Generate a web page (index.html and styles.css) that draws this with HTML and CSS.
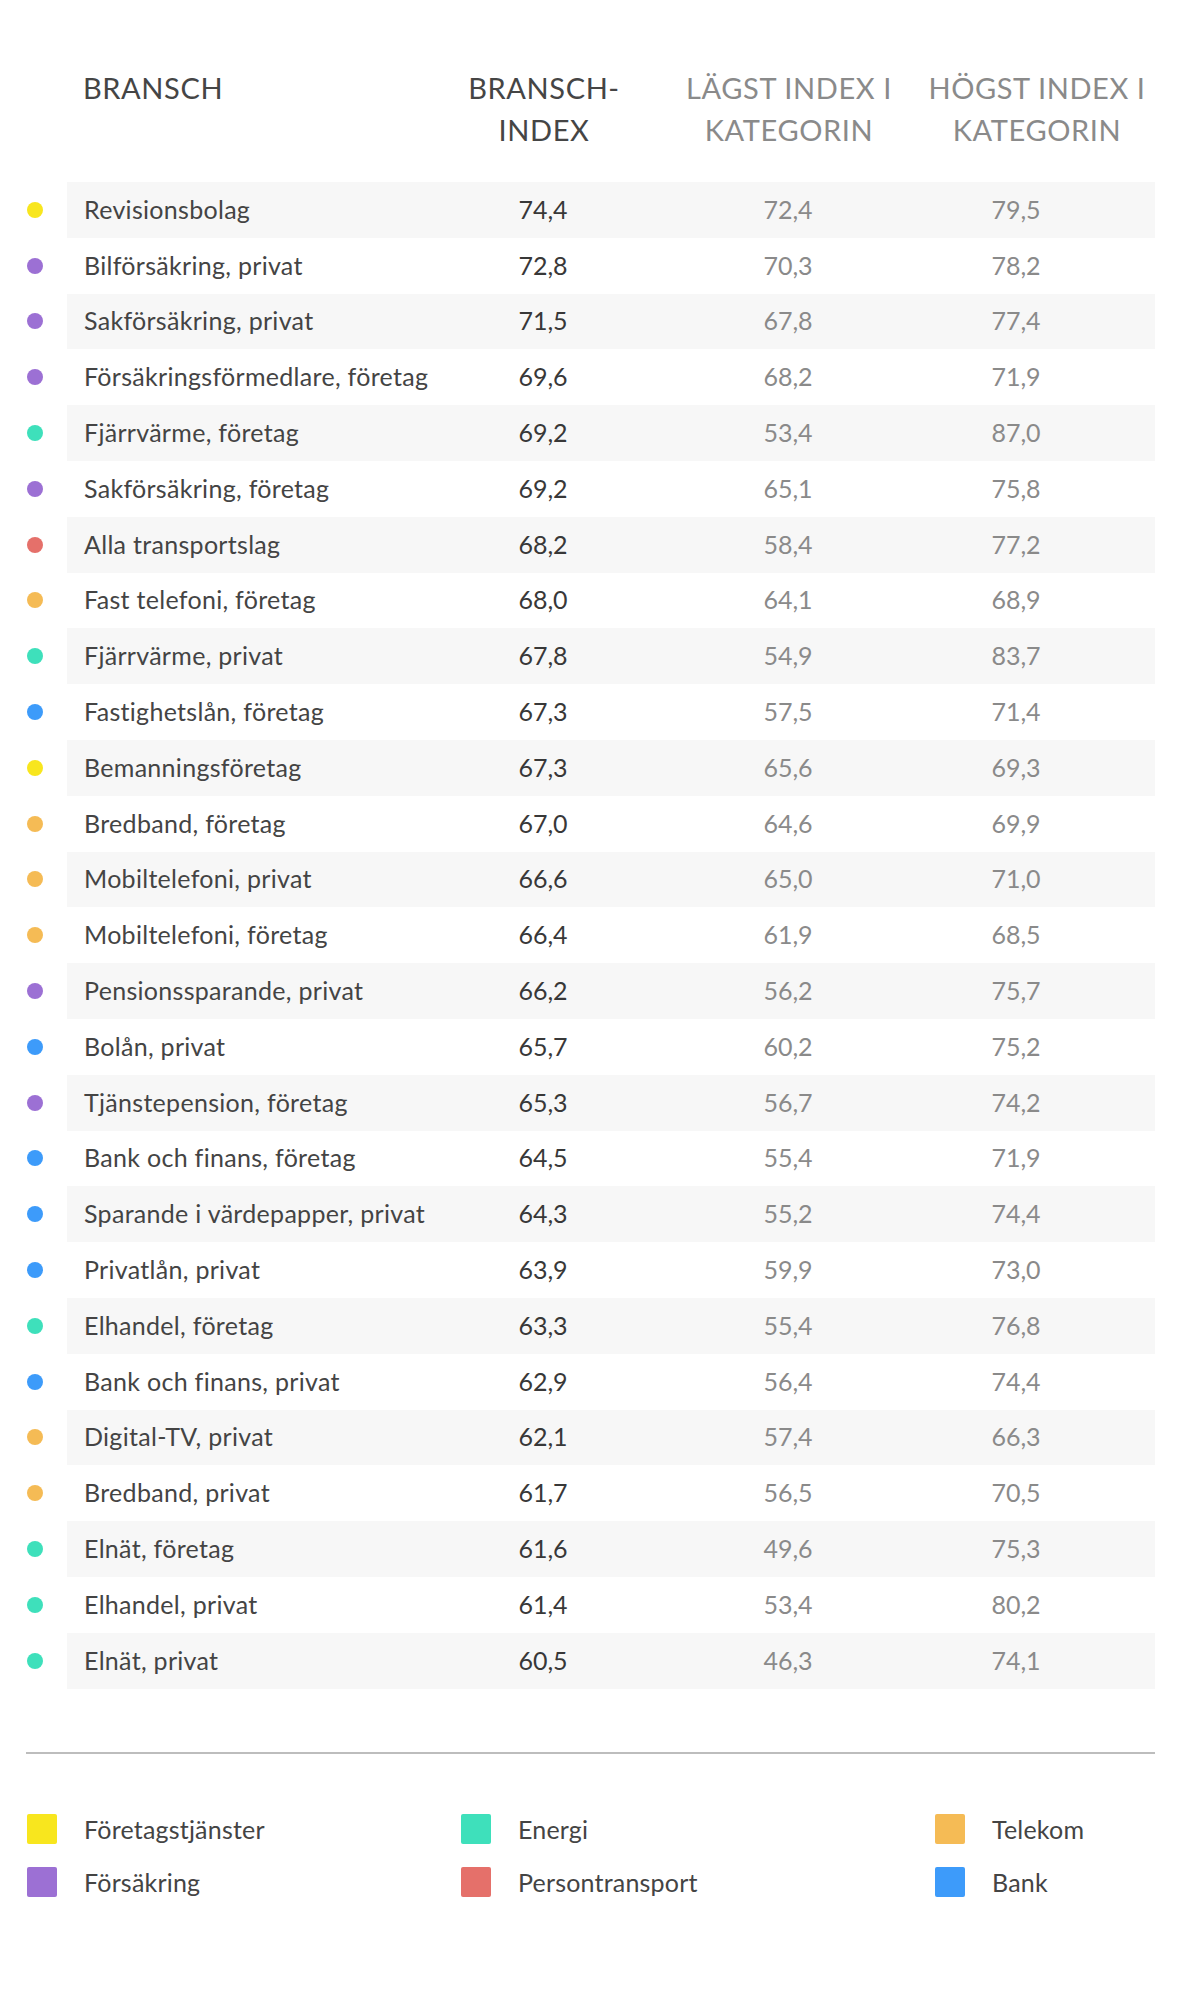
FILE: index.html
```html
<!DOCTYPE html>
<html lang="sv">
<head>
<meta charset="utf-8">
<title>Branschindex</title>
<link rel="stylesheet" href="styles.css">
</head>
<body>
<div class="page">
  <div class="table">
    <div class="head">
      <div class="lead"></div>
      <div class="head-grid">
        <div class="h h-name"><span>BRANSCH</span></div>
        <div class="h h-c"><span>BRANSCH-<br>INDEX</span></div>
        <div class="h h-c h-muted"><span>LÄGST INDEX I<br>KATEGORIN</span></div>
        <div class="h h-c h-muted"><span>HÖGST INDEX I<br>KATEGORIN</span></div>
      </div>
    </div>

    <div class="row"><div class="lead"><i class="dot c-ftj"></i></div><div class="band"><span class="name">Revisionsbolag</span><span class="v">74,4</span><span class="v muted">72,4</span><span class="v muted">79,5</span></div></div>
    <div class="row"><div class="lead"><i class="dot c-fors"></i></div><div class="band"><span class="name">Bilförsäkring, privat</span><span class="v">72,8</span><span class="v muted">70,3</span><span class="v muted">78,2</span></div></div>
    <div class="row"><div class="lead"><i class="dot c-fors"></i></div><div class="band"><span class="name">Sakförsäkring, privat</span><span class="v">71,5</span><span class="v muted">67,8</span><span class="v muted">77,4</span></div></div>
    <div class="row"><div class="lead"><i class="dot c-fors"></i></div><div class="band"><span class="name">Försäkringsförmedlare, företag</span><span class="v">69,6</span><span class="v muted">68,2</span><span class="v muted">71,9</span></div></div>
    <div class="row"><div class="lead"><i class="dot c-energi"></i></div><div class="band"><span class="name">Fjärrvärme, företag</span><span class="v">69,2</span><span class="v muted">53,4</span><span class="v muted">87,0</span></div></div>
    <div class="row"><div class="lead"><i class="dot c-fors"></i></div><div class="band"><span class="name">Sakförsäkring, företag</span><span class="v">69,2</span><span class="v muted">65,1</span><span class="v muted">75,8</span></div></div>
    <div class="row"><div class="lead"><i class="dot c-pers"></i></div><div class="band"><span class="name">Alla transportslag</span><span class="v">68,2</span><span class="v muted">58,4</span><span class="v muted">77,2</span></div></div>
    <div class="row"><div class="lead"><i class="dot c-tele"></i></div><div class="band"><span class="name">Fast telefoni, företag</span><span class="v">68,0</span><span class="v muted">64,1</span><span class="v muted">68,9</span></div></div>
    <div class="row"><div class="lead"><i class="dot c-energi"></i></div><div class="band"><span class="name">Fjärrvärme, privat</span><span class="v">67,8</span><span class="v muted">54,9</span><span class="v muted">83,7</span></div></div>
    <div class="row"><div class="lead"><i class="dot c-bank"></i></div><div class="band"><span class="name">Fastighetslån, företag</span><span class="v">67,3</span><span class="v muted">57,5</span><span class="v muted">71,4</span></div></div>
    <div class="row"><div class="lead"><i class="dot c-ftj"></i></div><div class="band"><span class="name">Bemanningsföretag</span><span class="v">67,3</span><span class="v muted">65,6</span><span class="v muted">69,3</span></div></div>
    <div class="row"><div class="lead"><i class="dot c-tele"></i></div><div class="band"><span class="name">Bredband, företag</span><span class="v">67,0</span><span class="v muted">64,6</span><span class="v muted">69,9</span></div></div>
    <div class="row"><div class="lead"><i class="dot c-tele"></i></div><div class="band"><span class="name">Mobiltelefoni, privat</span><span class="v">66,6</span><span class="v muted">65,0</span><span class="v muted">71,0</span></div></div>
    <div class="row"><div class="lead"><i class="dot c-tele"></i></div><div class="band"><span class="name">Mobiltelefoni, företag</span><span class="v">66,4</span><span class="v muted">61,9</span><span class="v muted">68,5</span></div></div>
    <div class="row"><div class="lead"><i class="dot c-fors"></i></div><div class="band"><span class="name">Pensionssparande, privat</span><span class="v">66,2</span><span class="v muted">56,2</span><span class="v muted">75,7</span></div></div>
    <div class="row"><div class="lead"><i class="dot c-bank"></i></div><div class="band"><span class="name">Bolån, privat</span><span class="v">65,7</span><span class="v muted">60,2</span><span class="v muted">75,2</span></div></div>
    <div class="row"><div class="lead"><i class="dot c-fors"></i></div><div class="band"><span class="name">Tjänstepension, företag</span><span class="v">65,3</span><span class="v muted">56,7</span><span class="v muted">74,2</span></div></div>
    <div class="row"><div class="lead"><i class="dot c-bank"></i></div><div class="band"><span class="name">Bank och finans, företag</span><span class="v">64,5</span><span class="v muted">55,4</span><span class="v muted">71,9</span></div></div>
    <div class="row"><div class="lead"><i class="dot c-bank"></i></div><div class="band"><span class="name">Sparande i värdepapper, privat</span><span class="v">64,3</span><span class="v muted">55,2</span><span class="v muted">74,4</span></div></div>
    <div class="row"><div class="lead"><i class="dot c-bank"></i></div><div class="band"><span class="name">Privatlån, privat</span><span class="v">63,9</span><span class="v muted">59,9</span><span class="v muted">73,0</span></div></div>
    <div class="row"><div class="lead"><i class="dot c-energi"></i></div><div class="band"><span class="name">Elhandel, företag</span><span class="v">63,3</span><span class="v muted">55,4</span><span class="v muted">76,8</span></div></div>
    <div class="row"><div class="lead"><i class="dot c-bank"></i></div><div class="band"><span class="name">Bank och finans, privat</span><span class="v">62,9</span><span class="v muted">56,4</span><span class="v muted">74,4</span></div></div>
    <div class="row"><div class="lead"><i class="dot c-tele"></i></div><div class="band"><span class="name">Digital-TV, privat</span><span class="v">62,1</span><span class="v muted">57,4</span><span class="v muted">66,3</span></div></div>
    <div class="row"><div class="lead"><i class="dot c-tele"></i></div><div class="band"><span class="name">Bredband, privat</span><span class="v">61,7</span><span class="v muted">56,5</span><span class="v muted">70,5</span></div></div>
    <div class="row"><div class="lead"><i class="dot c-energi"></i></div><div class="band"><span class="name">Elnät, företag</span><span class="v">61,6</span><span class="v muted">49,6</span><span class="v muted">75,3</span></div></div>
    <div class="row"><div class="lead"><i class="dot c-energi"></i></div><div class="band"><span class="name">Elhandel, privat</span><span class="v">61,4</span><span class="v muted">53,4</span><span class="v muted">80,2</span></div></div>
    <div class="row"><div class="lead"><i class="dot c-energi"></i></div><div class="band"><span class="name">Elnät, privat</span><span class="v">60,5</span><span class="v muted">46,3</span><span class="v muted">74,1</span></div></div>
  </div>

  <hr class="sep">

  <div class="legend">
    <div class="item"><i class="sq c-ftj"></i><span>Företagstjänster</span></div>
    <div class="item"><i class="sq c-energi"></i><span>Energi</span></div>
    <div class="item"><i class="sq c-tele"></i><span>Telekom</span></div>
    <div class="item"><i class="sq c-fors"></i><span>Försäkring</span></div>
    <div class="item"><i class="sq c-pers"></i><span>Persontransport</span></div>
    <div class="item"><i class="sq c-bank"></i><span>Bank</span></div>
  </div>
</div>
</body>
</html>
```

FILE: styles.css
```css
* { box-sizing: border-box; }

html, body {
  margin: 0;
  padding: 0;
  background: #ffffff;
}

body {
  font-family: Lato, "Noto Sans", "Liberation Sans", sans-serif;
  color: #444444;
  height: 1994px;
}

.page {
  padding: 67px 45px 0 0;
}

/* header */
.head {
  display: flex;
  margin-bottom: 31px;
}

.lead {
  width: 67px;
  flex: none;
  display: flex;
  align-items: center;
}

.head-grid {
  flex: 1;
  display: grid;
  grid-template-columns: 386px 182px 308px 188px;
}

.h {
  font-size: 29px;
  line-height: 42px;
  letter-spacing: 0.6px;
  color: #454545;
  white-space: nowrap;
}

.h-name {
  padding-left: 16px;
}

.h-c {
  display: flex;
  justify-content: center;
  text-align: center;
}

.h-muted { color: #8a8a8a; }

/* rows */
.row {
  display: flex;
  height: 55.8px;
}

.dot {
  display: block;
  width: 16px;
  height: 16px;
  border-radius: 50%;
  margin-left: 27px;
}

.band {
  flex: 1;
  display: grid;
  grid-template-columns: 386px 180px 310px 146px;
  align-items: center;
  font-size: 25px;
  padding-bottom: 2px;
}

.row:nth-child(even) .band { background: #f7f7f7; }

.name {
  padding-left: 17px;
  color: #444444;
  letter-spacing: 0.3px;
  white-space: nowrap;
}

.v {
  text-align: center;
  color: #383838;
}

.v.muted { color: #8a8a8a; }

/* separator */
.sep {
  border: 0;
  border-top: 2px solid #bdbdbd;
  margin: 63px 0 0 26px;
  height: 0;
}

/* legend */
.legend {
  display: grid;
  grid-template-columns: 434px 474px 1fr;
  row-gap: 23px;
  padding-left: 27px;
  margin-top: 60px;
}

.item {
  display: flex;
  align-items: center;
  height: 30px;
  font-size: 25px;
  letter-spacing: 0.2px;
  color: #444444;
}

.sq {
  display: block;
  width: 30px;
  height: 30px;
  border-radius: 2px;
  margin-right: 27px;
  flex: none;
}

.c-ftj { background: #f8e61e; }
.c-fors { background: #9c70d4; }
.c-energi { background: #3ee0bb; }
.c-pers { background: #e5706a; }
.c-tele { background: #f5bb55; }
.c-bank { background: #3d9bfa; }
```
